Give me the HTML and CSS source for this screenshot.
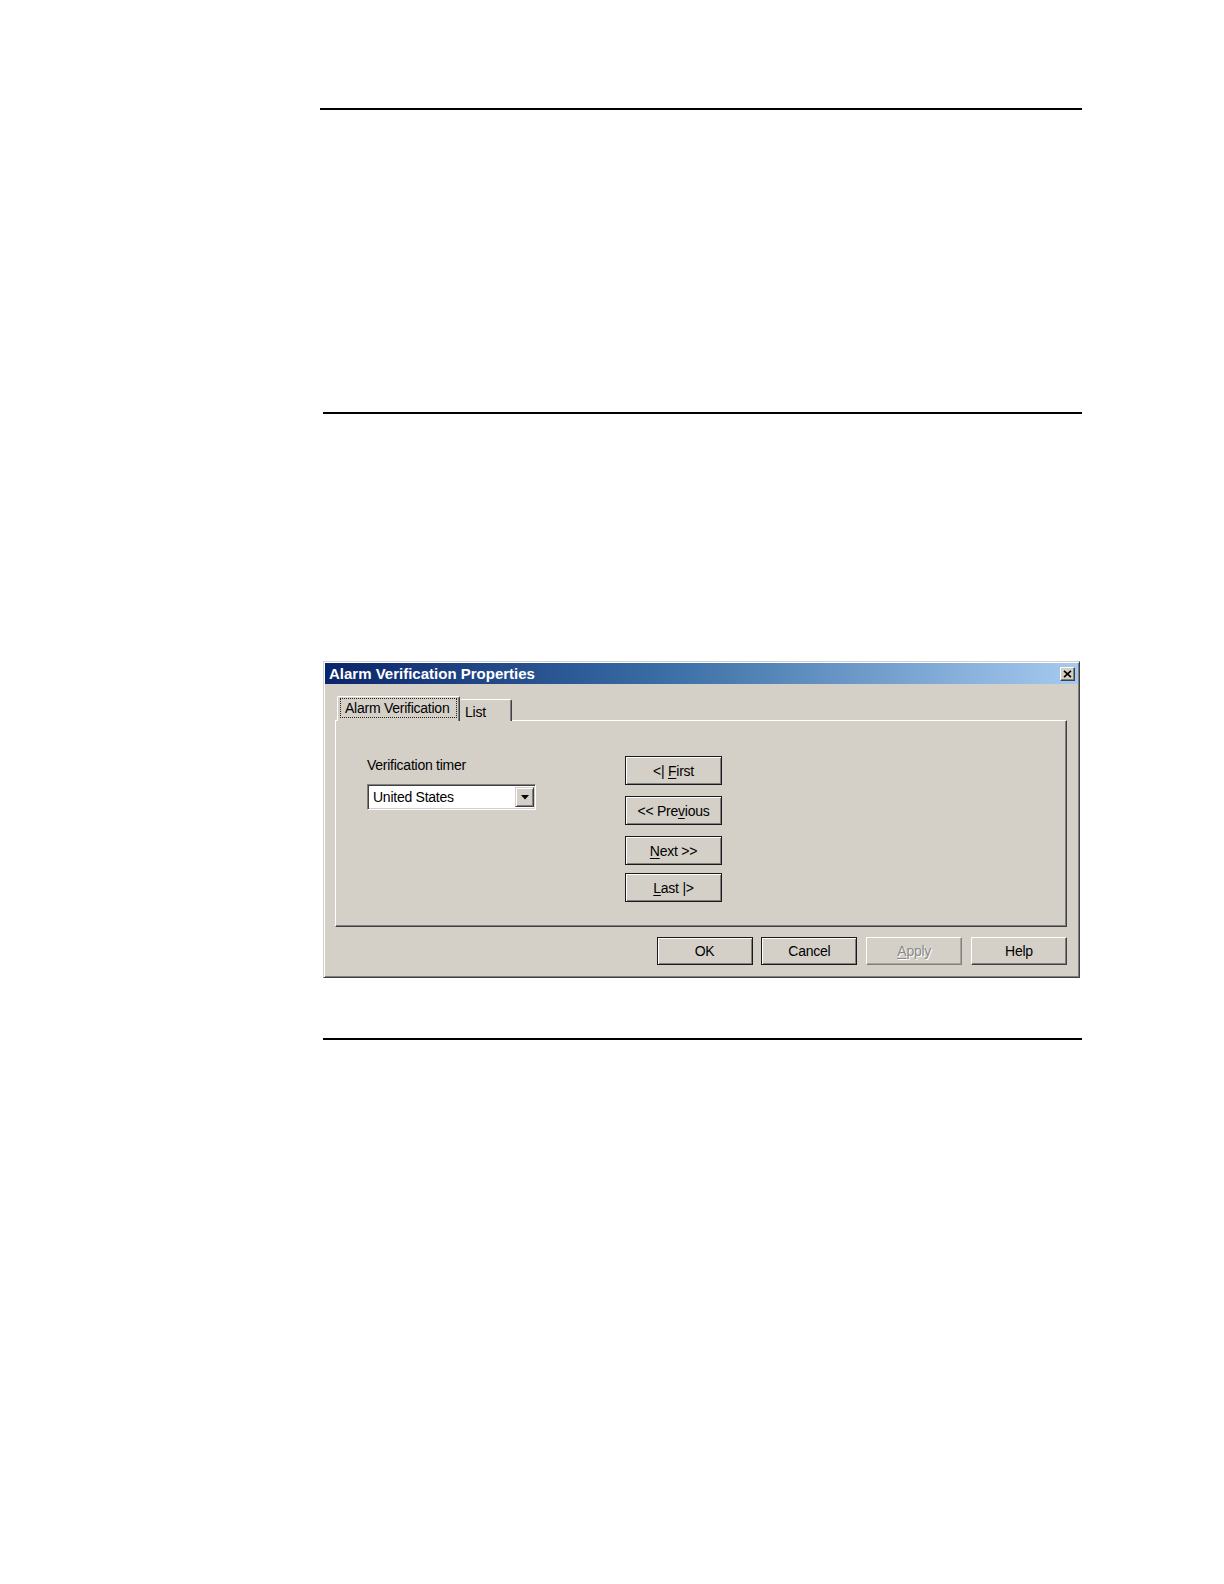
FILE: index.html
```html
<!DOCTYPE html>
<html lang="en">
<head>
<meta charset="utf-8">
<title>Alarm Verification Properties</title>
<link rel="stylesheet" href="styles.css">
</head>
<body>
<div class="page">
  <div class="rule rule-top"></div>
  <div class="rule rule-mid"></div>

  <div class="dialog">
    <div class="titlebar">
      <span class="title">Alarm Verification Properties</span>
      <span class="close">
        <svg width="9" height="8" viewBox="0 0 9 8"><path d="M1 0.8 L8 7.2 M8 0.8 L1 7.2" stroke="#000" stroke-width="1.6" fill="none"/></svg>
      </span>
    </div>
    <div class="dlg-body">
      <div class="tabs">
        <div class="tab tab-active"><span class="focus">Alarm Verification</span></div>
        <div class="tab tab-list">List</div>
      </div>
      <div class="panel">
        <div class="left-col">
          <div class="label">Verification timer</div>
          <div class="combo">
            <span class="combo-text">United States</span>
            <span class="combo-btn">
              <svg width="8" height="5" viewBox="0 0 8 5"><path d="M0 0 H8 L4 4.5 Z" fill="#000"/></svg>
            </span>
          </div>
        </div>
        <div class="nav-col">
          <div class="btn nbtn btn-framed">&lt;|&nbsp;<u>F</u>irst</div>
          <div class="btn nbtn btn-framed">&lt;&lt; Pre<u>v</u>ious</div>
          <div class="btn nbtn btn-framed"><u>N</u>ext &gt;&gt;</div>
          <div class="btn nbtn btn-framed nbtn-last"><u>L</u>ast |&gt;</div>
        </div>
      </div>
      <div class="actions">
        <div class="btn abtn btn-framed">OK</div>
        <div class="btn abtn btn-framed">Cancel</div>
        <div class="btn abtn btn-disabled"><u>A</u>pply</div>
        <div class="btn abtn btn-plain">Help</div>
      </div>
    </div>
  </div>

  <div class="rule rule-bottom"></div>
</div>
</body>
</html>
```

FILE: styles.css
```css
html, body {
  margin: 0;
  padding: 0;
  background: #ffffff;
}

body {
  font-family: "Liberation Sans", Arial, sans-serif;
  color: #000;
}

.page {
  width: 762px;
  margin-left: 320px;
  padding-top: 108px;
}

.rule {
  height: 2px;
  background: #000;
}

.rule-mid {
  margin-top: 302px;
  margin-left: 3px;
}

.rule-bottom {
  margin-top: 60px;
  margin-left: 3px;
}

/* ---------- dialog ---------- */
.dialog {
  box-sizing: border-box;
  width: 757px;
  height: 317px;
  margin-top: 247px;
  margin-left: 3px;
  background: #d4d0c8;
  border: 1px solid;
  border-color: #d4d0c8 #404040 #404040 #d4d0c8;
  box-shadow: inset 1px 1px 0 #ffffff, inset -1px -1px 0 #808080;
  padding: 1px;
  font-size: 14px;
  letter-spacing: -0.25px;
}

.titlebar {
  height: 21px;
  display: flex;
  align-items: center;
  justify-content: space-between;
  background: linear-gradient(to right, #0a246a 0%, #3a6ea5 45%, #a6caf0 100%);
  padding: 0 3px 0 4px;
}

.title {
  color: #ffffff;
  font-weight: bold;
  font-size: 15px;
  letter-spacing: 0;
  line-height: 21px;
}

.close {
  box-sizing: border-box;
  width: 15px;
  height: 14px;
  background: #d4d0c8;
  border: 1px solid;
  border-color: #ffffff #404040 #404040 #ffffff;
  box-shadow: inset -1px -1px 0 #808080;
  display: flex;
  align-items: center;
  justify-content: center;
}

.dlg-body {
  padding: 12px 11px 0 10px;
}

/* ---------- tabs ---------- */
.tabs {
  display: flex;
  align-items: flex-end;
  height: 25px;
  padding-left: 2px;
  position: relative;
  z-index: 1;
  margin-bottom: -1px;
}

.tab {
  box-sizing: border-box;
  background: #d4d0c8;
  border-top: 1px solid #ffffff;
  border-left: 1px solid #ffffff;
  border-right: 1px solid #404040;
  box-shadow: inset -1px 0 0 #808080;
  border-radius: 2px 2px 0 0;
}

.tab-active {
  width: 123px;
  height: 25px;
  padding: 1px 0 0 2px;
}

.focus {
  display: block;
  width: 117px;
  box-sizing: border-box;
  height: 20px;
  line-height: 18px;
  border: 1px dotted #222;
  padding-left: 4px;
  white-space: nowrap;
}

.tab-list {
  width: 52px;
  height: 22px;
  border-left: none;
  padding: 3px 0 0 5px;
  line-height: 18px;
}

.panel {
  box-sizing: border-box;
  height: 207px;
  border: 1px solid;
  border-color: #ffffff #404040 #404040 #ffffff;
  box-shadow: inset -1px -1px 0 #808080;
  padding: 35px 0 0 31px;
  display: flex;
}

.left-col {
  width: 258px;
}

.label {
  line-height: 18px;
  height: 18px;
  white-space: nowrap;
}

.combo {
  box-sizing: border-box;
  margin-top: 10px;
  width: 169px;
  height: 26px;
  background: #ffffff;
  border: 1px solid;
  border-color: #808080 #ffffff #ffffff #808080;
  box-shadow: inset 1px 1px 0 #404040, inset -1px -1px 0 #d4d0c8;
  padding: 2px 1px 2px 5px;
  display: flex;
  align-items: center;
  justify-content: space-between;
}

.combo-text {
  line-height: 20px;
}

.combo-btn {
  box-sizing: border-box;
  width: 19px;
  height: 20px;
  background: #d4d0c8;
  border: 1px solid;
  border-color: #d4d0c8 #404040 #404040 #d4d0c8;
  box-shadow: inset 1px 1px 0 #ffffff, inset -1px -1px 0 #808080;
  display: flex;
  align-items: center;
  justify-content: center;
}

.nav-col {
  display: flex;
  flex-direction: column;
  gap: 11px;
}

.btn {
  box-sizing: border-box;
  display: flex;
  align-items: center;
  justify-content: center;
  background: #d4d0c8;
  white-space: nowrap;
}

.nbtn {
  width: 97px;
  height: 29px;
}

.nbtn-last {
  margin-top: -3px;
}

.btn u {
  text-decoration: underline;
  text-underline-offset: 2px;
}

.btn-framed {
  border: 1px solid #1a1a1a;
  box-shadow: inset 1px 1px 0 #ffffff, inset -1px -1px 0 #808080;
}

.btn-plain {
  border: 1px solid;
  border-color: #ffffff #404040 #404040 #ffffff;
  box-shadow: inset -1px -1px 0 #808080;
}

.btn-disabled {
  border: 1px solid;
  border-color: #ffffff #808080 #808080 #ffffff;
  box-shadow: inset -1px -1px 0 #a8a49c;
  color: #8a8a8a;
  text-shadow: 1px 1px 0 #ffffff;
}

.actions {
  margin-top: 10px;
  display: flex;
  justify-content: flex-end;
  gap: 8.8px;
}

.abtn {
  width: 96px;
  height: 28px;
}
```
